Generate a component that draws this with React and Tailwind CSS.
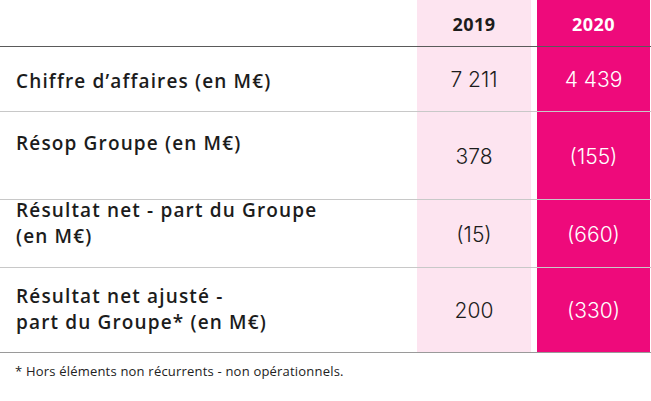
import React from 'react';

const rows = [
  { label: ['Chiffre d’affaires (en M€)'], a: '7 211', b: '4 439', h: 'h-[64px]', align: 'items-center pt-[4px]', shift: '' },
  { label: ['Résop Groupe (en M€)'], a: '378', b: '(155)', h: 'h-[87px]', align: 'items-start pt-[18px]', shift: '' },
  { label: ['Résultat net - part du Groupe', '(en M€)'], a: '(15)', b: '(660)', h: 'h-[67px]', align: 'items-start', shift: '-mt-[3px]' },
  { label: ['Résultat net ajusté -', 'part du Groupe* (en M€)'], a: '200', b: '(330)', h: 'h-[84px]', align: 'items-center pb-[2px]', shift: '' },
];

export default function App() {
  return (
    <div className="w-[651px] h-[401px] bg-white text-[#1c1c1c] font-['Open_Sans','Liberation_Sans',sans-serif]">
      {/* header */}
      <div className="grid grid-cols-[417px_114px_6px_113px_1px] h-[47px] border-b border-[#5a5a5a]">
        <div />
        <div className="bg-[#fde4f0] flex items-center justify-center pt-[2px] text-[18px] font-bold tracking-[0.4px]">2019</div>
        <div />
        <div className="bg-[#ee0a7b] flex items-center justify-center pt-[2px] text-[18px] font-bold tracking-[0.4px] text-white">2020</div>
        <div />
      </div>

      {rows.map((r, i) => (
        <div
          key={i}
          className={
            'grid grid-cols-[417px_114px_6px_113px_1px] border-b ' +
            (i === rows.length - 1 ? 'border-[#9a9a9a]' : 'border-[#c8c8c8]')
          }
        >
          <div className={'flex pl-[16px] ' + r.h + ' ' + r.align}>
            <div className={'text-[19px] leading-[26px] font-semibold tracking-[1.15px] ' + r.shift}>
              {r.label.map((l, j) => (
                <div key={j}>{l}</div>
              ))}
            </div>
          </div>
          <div className="bg-[#fde4f0] flex items-center justify-center text-[21px] font-light pt-[2px] font-['Inter',sans-serif]">{r.a}</div>
          <div />
          <div className="bg-[#ee0a7b] flex items-center justify-center text-[21px] font-light text-white pt-[2px] font-['Inter',sans-serif]">{r.b}</div>
          <div />
        </div>
      ))}

      <div className="pl-[15px] pt-[9px] text-[13px] tracking-[0.2px] text-[#222]">
        * Hors éléments non récurrents - non opérationnels.
      </div>
    </div>
  );
}
